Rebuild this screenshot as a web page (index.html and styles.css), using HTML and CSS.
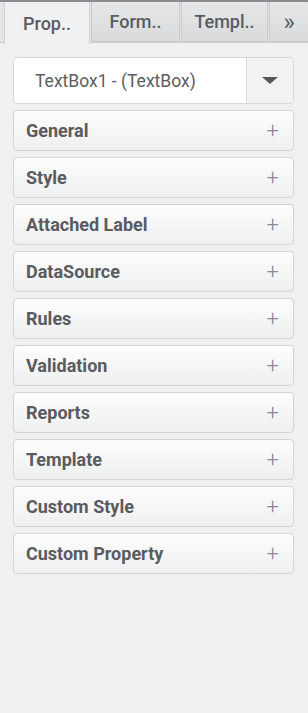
FILE: index.html
```html
<!DOCTYPE html>
<html lang="en">
<head>
    <meta charset="UTF-8">
    <meta name="viewport" content="width=device-width, initial-scale=1.0">
    <title>Properties</title>
    <link rel="stylesheet" href="styles.css">
</head>
<body>
    <div class="tabs">
        <div class="tab active">Prop..</div>
        <div class="tab t2">Form..</div>
        <div class="tab t3">Templ..</div>
        <div class="tab more">&raquo;</div>
    </div>

    <div class="content">
        <div class="select">
            <div class="select-text">TextBox1 - (TextBox)</div>
            <div class="select-btn"><span class="caret"></span></div>
        </div>

        <div class="panel"><span>General</span><span class="plus">+</span></div>
        <div class="panel"><span>Style</span><span class="plus">+</span></div>
        <div class="panel"><span>Attached Label</span><span class="plus">+</span></div>
        <div class="panel"><span>DataSource</span><span class="plus">+</span></div>
        <div class="panel"><span>Rules</span><span class="plus">+</span></div>
        <div class="panel"><span>Validation</span><span class="plus">+</span></div>
        <div class="panel"><span>Reports</span><span class="plus">+</span></div>
        <div class="panel"><span>Template</span><span class="plus">+</span></div>
        <div class="panel"><span>Custom Style</span><span class="plus">+</span></div>
        <div class="panel"><span>Custom Property</span><span class="plus">+</span></div>
    </div>
</body>
</html>
```

FILE: styles.css
```css
body { margin: 0; background: #eff0f2; font-family: Roboto, "Liberation Sans", sans-serif; color: #58595b; height: 713px; border-top: 2px solid #8a8c90; box-sizing: border-box; }

.tabs { display: flex; height: 40px; padding-left: 4px; background: #e4e5e7; border-bottom: 1px solid #d0d1d4; }
.tab { width: 86px; margin-right: 1px; display: flex; align-items: center; justify-content: center; font-size: 18px; font-weight: 500; color: #5a5b5e; background: linear-gradient(#e6e7e9, #d9dadc); border: 1px solid #c9cacd; border-top: none; box-sizing: border-box; }
.tab.active { background: #f0f1f3; height: 42px; border-color: #d0d1d4; border-bottom: none; }
.tab.t2 { width: 89px; }
.tab.t3 { width: 87px; }
.tab.more { margin-right: 0; flex: 1; font-size: 24px; font-weight: 400; border-right: none; }

.content { padding: 14px 14px 0 13px; display: flex; flex-direction: column; gap: 6px; }

.select { display: flex; height: 47px; background: #fff; border: 1px solid #d6d7da; border-radius: 4px; box-sizing: border-box; }
.select-text { flex: 1; display: flex; align-items: center; padding-left: 21px; font-size: 17.5px; color: #5b5c60; }
.select-btn { width: 46px; border-left: 1px solid #dcdde0; background: #f2f2f3; border-radius: 0 4px 4px 0; display: flex; align-items: center; justify-content: center; }
.caret { width: 0; height: 0; border-left: 8px solid transparent; border-right: 8px solid transparent; border-top: 7px solid #55565a; }

.panel { height: 41px; display: flex; align-items: center; justify-content: space-between; padding: 0 14px 0 12px; background: linear-gradient(#fdfdfd, #eeeff0); border: 1px solid #d3d4d7; border-radius: 4px; box-sizing: border-box; font-size: 18px; font-weight: 700; color: #5a5b5f; }
.plus { font-size: 22px; font-weight: 300; color: #8a8b8e; }
```
